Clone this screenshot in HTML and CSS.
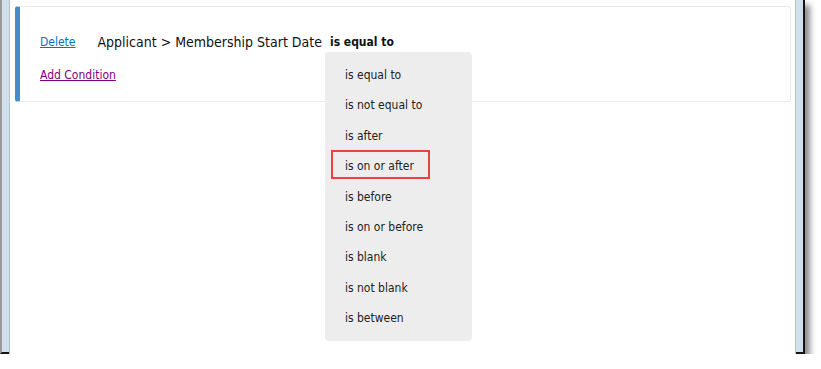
FILE: index.html
```html
<!DOCTYPE html>
<html lang="en">
  <head>
    <meta charset="UTF-8" />
    <meta name="viewport" content="width=device-width, initial-scale=1.0" />
    <title>Condition Builder</title>
    <link rel="stylesheet" href="styles.css">
  </head>
  <body>
    <div class="window">
      <div class="pane">
        <div class="card">
          <div class="row">
            <a href="#" class="delete">Delete</a>
            <span class="field">Applicant &gt; Membership Start Date</span>
            <span class="operator">
              is equal to
              <ul class="menu">
                <li>is equal to</li>
                <li>is not equal to</li>
                <li>is after</li>
                <li class="selected">is on or after</li>
                <li>is before</li>
                <li>is on or before</li>
                <li>is blank</li>
                <li>is not blank</li>
                <li>is between</li>
              </ul>
            </span>
          </div>
          <a href="#" class="add">Add Condition</a>
        </div>
      </div>
    </div>
  </body>
</html>
```

FILE: styles.css
```css
body {
  margin: 0;
  background-color: #fff;
  font-family: "DejaVu Sans Condensed", "DejaVu Sans", Tahoma, sans-serif;
}
.window {
  width: 787px;
  height: 349px;
  padding: 0 7px 3px 7px;
  background-color: #d3deec;
  border-left: 2px solid #9a9a9a;
  border-right: 2px solid #151515;
  border-bottom: 2px solid #151515;
  box-shadow: 5px 5px 6px rgba(0, 0, 0, 0.45);
}
.pane {
  height: 348px;
  background-color: #fff;
  border: 1px solid #a8c4ea;
  border-top: none;
  padding: 6px 4px 0 5px;
}
.card {
  height: 94px;
  border: 1px solid #e9e9e9;
  border-left: 5px solid #448ccb;
  border-radius: 3px;
  padding: 0 0 0 20px;
}
.row {
  display: flex;
  align-items: center;
  margin-top: 25px;
  height: 20px;
}
.delete {
  font-size: 12px;
  color: #0b6fc8;
  margin-right: 22px;
}
.field {
  font-size: 14px;
  color: #111;
  margin-right: 8px;
}
.operator {
  position: relative;
  font-size: 12px;
  font-weight: bold;
  color: #111;
}
.add {
  display: inline-block;
  margin-top: 16px;
  font-size: 12px;
  color: #800080;
}
.menu {
  position: absolute;
  left: -5px;
  top: 17px;
  width: 147px;
  margin: 0;
  padding: 8px 0 7px 0;
  list-style: none;
  background-color: #ededed;
  border-radius: 4px;
  font-weight: normal;
}
.menu li {
  height: 30.4px;
  line-height: 30px;
  padding-left: 20px;
  color: #222;
  position: relative;
}
.menu .selected::before {
  content: "";
  position: absolute;
  left: 6px;
  top: -1px;
  width: 95px;
  height: 25px;
  border: 2px solid #e8443a;
}
```
